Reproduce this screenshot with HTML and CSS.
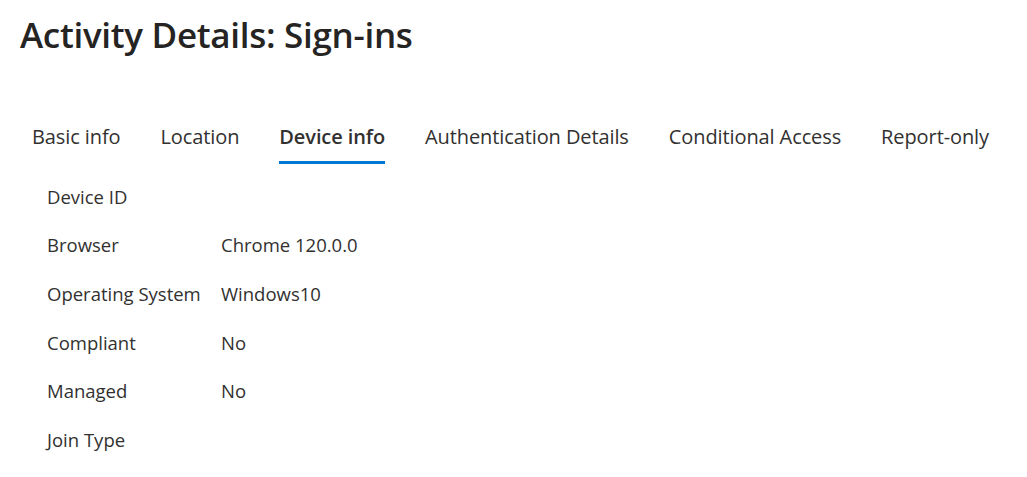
FILE: index.html
```html
<!DOCTYPE html>
<html>
<head>
<meta charset="utf-8">
<link rel="stylesheet" href="styles.css">
</head>
<body>
<div class="page">
  <h1 class="title">Activity Details: Sign-ins</h1>
  <nav class="tabs">
    <div class="tab">Basic info</div>
    <div class="tab">Location</div>
    <div class="tab active">Device info</div>
    <div class="tab">Authentication Details</div>
    <div class="tab">Conditional Access</div>
    <div class="tab">Report-only</div>
  </nav>
  <div class="details">
    <div class="row"><div class="label">Device ID</div><div class="value"></div></div>
    <div class="row"><div class="label">Browser</div><div class="value">Chrome 120.0.0</div></div>
    <div class="row"><div class="label">Operating System</div><div class="value">Windows10</div></div>
    <div class="row"><div class="label">Compliant</div><div class="value">No</div></div>
    <div class="row"><div class="label">Managed</div><div class="value">No</div></div>
    <div class="row"><div class="label">Join Type</div><div class="value"></div></div>
  </div>
</div>
</body>
</html>
```
FILE: styles.css
```css
html, body {
  margin: 0;
  padding: 0;
  background: #ffffff;
}
body {
  font-family: "Open Sans", "Noto Sans", sans-serif;
  color: #323130;
}
.page {
  padding: 11px 0 0 20px;
}
.title {
  margin: 0;
  font-size: 35px;
  font-weight: 600;
  line-height: 48px;
  color: #252423;
  letter-spacing: -0.3px;
}
.tabs {
  display: flex;
  gap: 40px;
  margin-top: 64px;
  padding-left: 12px;
}
.tab {
  font-size: 20px;
  line-height: 28px;
  padding-bottom: 10px;
  border-bottom: 3px solid transparent;
  letter-spacing: -0.1px;
  color: #323130;
}
.tab.active {
  font-weight: 600;
  border-bottom-color: #0078d4;
}
.details {
  padding-left: 27px;
  margin-top: 8px;
}
.row {
  display: flex;
  height: 48.6px;
  align-items: center;
  font-size: 18.5px;
}
.label {
  width: 174px;
}
```
